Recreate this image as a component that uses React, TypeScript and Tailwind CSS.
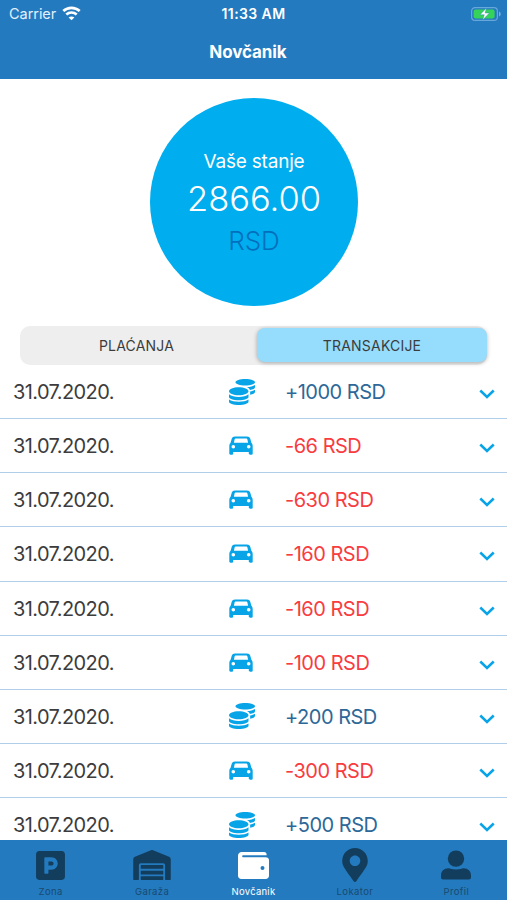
import { FaCoins, FaMapMarkerAlt, FaParking, FaWarehouse } from "react-icons/fa";

const transactions = [1000, -66, -630, -160, -160, -100, 200, -300, 500];

function CarIcon() {
  return (
    <svg className="h-[19px] w-6" viewBox="0 0 24 19" fill="#08a4e8">
      <path
        fillRule="evenodd"
        d="M6 .4h12c1.700 0 2.700.7 3.200 2.100l1.200 4.200c.9.9 1.300 2 1.300 3.600v7.200c0 .8-.4 1.200-1.200 1.200h-1.500c-.8 0-1.200-.4-1.200-1.200v-1.400H4.200v1.400c0 .8-.4 1.200-1.200 1.200H1.500c-.8 0-1.200-.4-1.200-1.200v-7.200c0-1.600.4-2.700 1.300-3.600l1.200-4.200C3.300 1.100 4.300.4 6 .4ZM7 2.500c-.8 0-1.200.3-1.400 1L4.900 6.700h14.200l-.7-3.200c-.2-.7-.6-1-1.400-1ZM4.300 9a1.800 1.800 0 1 0 0 3.600a1.800 1.800 0 1 0 0-3.600ZM19.700 9a1.800 1.800 0 1 0 0 3.600a1.800 1.800 0 1 0 0-3.600Z"
      />
    </svg>
  );
}

function WifiIcon() {
  return (
    <svg className="h-[15px] w-[19px]" viewBox="0 0 19 15" fill="none" stroke="white" strokeWidth="2.700">
      <path d="M1.300 5.100C6 .7 13 .7 17.700 5.100M4.300 8.500c3-2.700 7.400-2.700 10.400 0" />
      <path d="M9.500 14.300 6.600 11.500c1.700-1.500 4.100-1.500 5.800 0Z" fill="white" stroke="none" />
    </svg>
  );
}

function BatteryIcon() {
  return (
    <svg className="h-4 w-[31px]" viewBox="0 0 31 16">
      <rect x=".6" y="1.600" width="25.800" height="12.800" rx="3.500" fill="none" stroke="#68a7dc" strokeWidth="1.200" />
      <rect x="2.600" y="3.600" width="21" height="8.800" rx="1.800" fill="#35d35a" />
      <path d="M28 5.500v5c2.300-.8 2.300-4.200 0-5Z" fill="#75afe0" />
      <path d="M15.500 2 9 8.700h4.300L11.600 14l6.800-7h-4.300Z" fill="white" stroke="#247abe" strokeWidth=".4" />
    </svg>
  );
}

function WalletIcon() {
  return (
    <svg className="h-[27px] w-[31px]" viewBox="0 0 31 27">
      <path
        fill="white"
        fillRule="evenodd"
        d="M4 0h22c1.700 0 2.700 1 2.700 3.200H5.300c-1.500 0-1.500 2 0 2h22.200C29.700 5.200 31 6.300 31 8.200v15.300c0 2.200-1.300 3.500-3.500 3.500h-24C1.300 27 0 25.700 0 23.500V4C0 1.500 1.500 0 4 0Zm20.500 14a2 2 0 1 0 0 4a2 2 0 1 0 0-4Z"
      />
    </svg>
  );
}

function PersonIcon() {
  return (
    <svg className="h-[30px] w-[30px]" viewBox="0 0 30 30" fill="currentColor">
      <circle cx="15" cy="8.600" r="8.200" />
      <path d="M7.500 18.200c1.500 0 3.700 1.300 7.500 1.300s6-1.300 7.500-1.300c4.500 0 7.500 3 7.500 7.300v1.800c0 1.400-.8 2.200-2.200 2.200H2.200C.8 29.500 0 28.700 0 27.300v-1.800c0-4.300 3-7.300 7.500-7.300Z" />
    </svg>
  );
}

const tabs = [
  { label: "Zona", icon: <FaParking className="size-[33px]" /> },
  { label: "Garaža", icon: <FaWarehouse className="h-[30px] w-[38px]" /> },
  { label: "Novčanik", icon: <WalletIcon />, active: true },
  { label: "Lokator", icon: <FaMapMarkerAlt className="h-[34px] w-[26px]" /> },
  { label: "Profil", icon: <PersonIcon /> },
];

export default function App() {
  return (
    <div className="flex h-[900px] w-[507px] flex-col overflow-hidden bg-white font-['Inter','Liberation_Sans',sans-serif] text-[#3c3c3c]">
      <header className="h-[79px] shrink-0 bg-[#247abe] text-white">
        <div className="grid h-[27px] grid-cols-3 items-center">
          <div className="flex items-center gap-[6px] pl-[9px]">
            <span className="text-[14.500px] tracking-[-0.05px] text-[#e0f0ff]">Carrier</span>
            <WifiIcon />
          </div>
          <div className="text-center text-[14px] font-semibold tracking-[0.4px]">11:33 AM</div>
          <div className="flex justify-end pr-[5px]"><BatteryIcon /></div>
        </div>
        <h1 className="mr-[11px] pt-[13px] text-center text-[17px] leading-6 font-bold tracking-[-0.1px]">Novčanik</h1>
      </header>

      <main className="flex min-h-0 flex-1 flex-col overflow-hidden">
        <section className="mt-[19px] ml-[150px] flex size-[208px] shrink-0 flex-col items-center rounded-full bg-[#00adee] pt-[50px] text-white">
          <div className="text-[19px] leading-7 tracking-[-0.2px]">Vaše stanje</div>
          <div className="text-[34.500px] leading-[45px] font-light">2866.00</div>
          <div className="text-[26px] leading-[39px] font-light text-[#0070bd]">RSD</div>
        </section>

        <div className="mx-5 mt-5 flex h-[39px] shrink-0 rounded-[10px] bg-[#eeeeee] text-[14px] tracking-[0.2px]">
          <button className="w-[237px] pr-1">PLAĆANJA</button>
          <button className="mt-[2px] h-[34px] w-[230px] rounded-lg bg-[#96dcfd] shadow-[0_1px_4px_rgba(0,0,0,0.3)]">TRANSAKCIJE</button>
        </div>

        <ul className="shrink-0 text-[20px]">
          {transactions.map((amount, index) => (
            <li key={index} className="flex h-[54.150px] items-center border-b-[1.500px] border-[#b0cdea] pl-[13px]">
              <span className="w-[216px] pt-px tracking-[-0.600px]">31.07.2020.</span>
              <span className="flex w-[56px]">
                {amount > 0 ? <FaCoins className="size-[26px] text-[#08a4e8]" /> : <CarIcon />}
              </span>
              <span className={amount > 0 ? "flex-1 pt-px tracking-[-0.500px] text-[#2d6898]" : "flex-1 pt-px tracking-[-0.500px] text-[#f83c3f]"}>
                {amount > 0 ? "+" : ""}{amount} RSD
              </span>
              <svg className="mt-[5px] mr-3 h-[10px] w-4" viewBox="0 0 16 10" fill="none" stroke="#08a4e8" strokeWidth="2.500">
                <path d="m1.300 1.500 6.700 6.500 6.700-6.500" />
              </svg>
            </li>
          ))}
        </ul>
      </main>

      <nav className="grid h-[60px] shrink-0 grid-cols-5 bg-[#247abe]">
        {tabs.map((tab) => (
          <div key={tab.label} className={tab.active ? "flex flex-col items-center text-white" : "flex flex-col items-center text-[#123d5d]"}>
            <div className="flex h-[46px] items-center pt-[4px]">{tab.icon}</div>
            <span className={tab.active ? "text-[9.500px] leading-3 tracking-[0.250px]" : "text-[9.500px] leading-3 tracking-[0.400px] text-[#174a71]"}>{tab.label}</span>
          </div>
        ))}
      </nav>
    </div>
  );
}
